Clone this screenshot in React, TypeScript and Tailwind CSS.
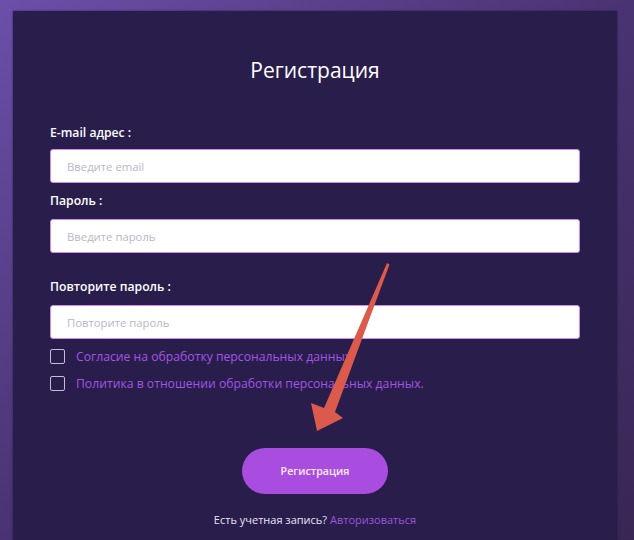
export default function App() {
  return (
    <div
      className="relative h-[540px] w-[634px] overflow-hidden bg-linear-to-br from-[#6c4fa9] via-[#4a3372] to-[#3a2655] pt-[11px] pl-[13px]"
      style={{ fontFamily: '"Open Sans", "Noto Sans", sans-serif' }}
    >
      <div className="h-[560px] w-[604px] bg-[#291d4c] px-[37px] pt-[44px] shadow-[0_0_2px_rgba(20,10,40,0.6)]">
        <h1 className="text-center text-[21px] leading-[30px] font-medium text-white">Регистрация</h1>

        <form className="mt-[38px] flex flex-col">
          <Label text="E-mail адрес :" />
          <Field placeholder="Введите email" className="mt-[6px]" />

          <Label text="Пароль :" className="mt-[8px]" />
          <Field placeholder="Введите пароль" className="mt-[8px]" type="password" />

          <Label text="Повторите пароль :" className="mt-[24px]" />
          <Field placeholder="Повторите пароль" className="mt-[8px]" type="password" />

          <div className="mt-[10px] flex flex-col gap-[12px]">
            <Check text="Согласие на обработку персональных данных" />
            <Check text="Политика в отношении обработки персональных данных." />
          </div>

          <div className="mt-[57px] flex justify-center">
            <button
              type="button"
              className="h-[46px] w-[146px] rounded-full bg-[#a94ce0] text-[10.7px] font-semibold text-[#fbeefe]"
            >
              Регистрация
            </button>
          </div>

          <p className="mt-[18px] text-center text-[11px] leading-[16px] text-[#e9e4f4]">
            Есть учетная запись? <a className="text-[#9b57d9]">Авторизоваться</a>
          </p>
        </form>
      </div>

      {/* annotation arrow */}
      <svg className="pointer-events-none absolute top-0 left-0" width="634" height="540" viewBox="0 0 634 540">
        <polygon
          points="387,263 389.5,264.5 335,412 343,418 317,431 311,403 324,408"
          fill="#dc5a4b"
        />
      </svg>
    </div>
  );
}

function Label({ text, className = "" }: { text: string; className?: string }) {
  return <label className={`text-[12.2px] leading-[20px] font-semibold text-white ${className}`}>{text}</label>;
}

function Field({
  placeholder,
  className = "",
  type = "text",
}: {
  placeholder: string;
  className?: string;
  type?: string;
}) {
  return (
    <input
      type={type}
      placeholder={placeholder}
      className={`h-[34px] w-full rounded-[3px] border border-[#cf8cef] bg-white px-[16px] text-[11.3px] text-[#333] outline-none placeholder:text-[#bab6c6] ${className}`}
    />
  );
}

function Check({ text }: { text: string }) {
  return (
    <label className="flex items-center gap-[11px]">
      <span className="h-[15px] w-[15px] shrink-0 rounded-[2px] border-[1.5px] border-[#c4bcd9]" />
      <span className="text-[12.2px] leading-[15px] text-[#a355e3]">{text}</span>
    </label>
  );
}
